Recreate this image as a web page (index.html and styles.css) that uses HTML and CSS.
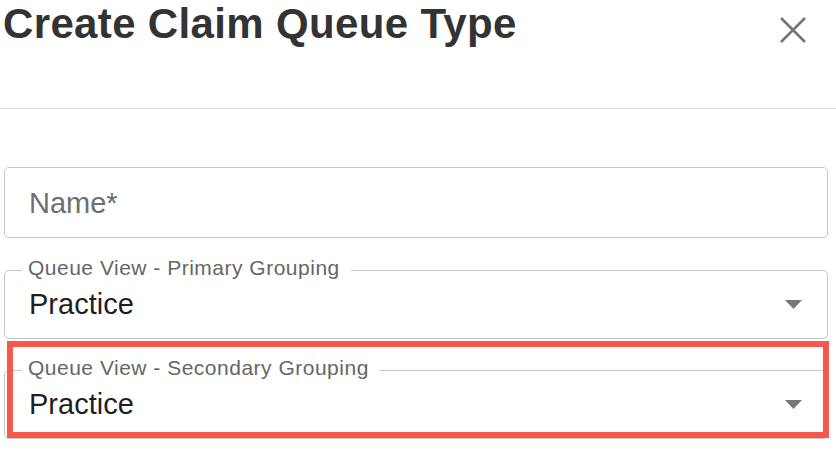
FILE: index.html
```html
<!DOCTYPE html>
<html lang="en">
<head>
<meta charset="utf-8">
<title>Create Claim Queue Type</title>
<link rel="stylesheet" href="styles.css">
</head>
<body>
<div class="dialog">
  <header class="dialog-header">
    <h1 class="dialog-title">Create Claim Queue Type</h1>
    <button class="close-btn" type="button" aria-label="Close">
      <svg class="close-icon" width="26" height="26" viewBox="0 0 26 26">
        <line x1="1" y1="1" x2="25" y2="25"/>
        <line x1="25" y1="1" x2="1" y2="25"/>
      </svg>
    </button>
  </header>
  <form class="dialog-body">
    <div class="field field-plain">
      <span class="placeholder">Name*</span>
    </div>
    <fieldset class="field field-select">
      <legend class="field-label">Queue View - Primary Grouping</legend>
      <div class="select-row">
        <span class="select-value">Practice</span>
        <svg class="arrow" width="17" height="9" viewBox="0 0 17 9"><path d="M0 0h17L8.5 9z"/></svg>
      </div>
    </fieldset>
    <div class="highlight-wrap">
      <fieldset class="field field-select">
        <legend class="field-label">Queue View - Secondary Grouping</legend>
        <div class="select-row">
          <span class="select-value">Practice</span>
          <svg class="arrow" width="17" height="9" viewBox="0 0 17 9"><path d="M0 0h17L8.5 9z"/></svg>
        </div>
      </fieldset>
      <div class="highlight"></div>
    </div>
  </form>
</div>
</body>
</html>
```

FILE: styles.css
```css
* { box-sizing: border-box; }

html, body {
  margin: 0;
  padding: 0;
  background: #ffffff;
}

body {
  font-family: "Liberation Sans", Arial, sans-serif;
  width: 836px;
  height: 452px;
  overflow: hidden;
}

.dialog-header {
  display: flex;
  justify-content: space-between;
  align-items: flex-start;
  height: 109px;
  border-bottom: 1px solid #e2e2e2;
  padding-left: 3px;
}

.dialog-title {
  margin: 0;
  font-size: 42px;
  line-height: 48px;
  font-weight: 700;
  color: #333333;
  letter-spacing: 0.35px;
}

.close-btn {
  border: 0;
  background: transparent;
  padding: 0;
  margin: 17px 30px 0 0;
  width: 26px;
  height: 26px;
  display: flex;
}

.close-icon line {
  stroke: #777777;
  stroke-width: 2.6;
}

.dialog-body {
  padding: 0 8px 0 4px;
  margin-top: 58px;
}

.field {
  border: 1px solid #c6c6c6;
  border-radius: 5px;
  margin: 0;
  min-width: 0;
}

.field-plain {
  height: 71px;
  display: flex;
  align-items: center;
  padding-left: 24px;
}

.placeholder {
  font-size: 29px;
  color: #6e6e6e;
  line-height: 34px;
}

.field-select {
  margin-top: 22px;
  padding: 7px 25px 17px 24px;
}

.field-label {
  margin-left: -7px;
  padding: 0 11px 4px 6px;
  font-size: 21px;
  line-height: 16px;
  color: #666666;
  letter-spacing: 0.5px;
}

.select-row {
  display: flex;
  justify-content: space-between;
  align-items: center;
  height: 34px;
}

.select-value {
  font-size: 29px;
  line-height: 34px;
  color: #1f1f1f;
}

.arrow path {
  fill: #777777;
}

.highlight-wrap {
  position: relative;
  margin-top: 21px;
}

.highlight-wrap .field-select {
  margin-top: 0;
}

.highlight {
  position: absolute;
  left: 3px;
  right: -1px;
  top: -19px;
  bottom: 1px;
  border: 6px solid #f5584c;
  pointer-events: none;
}
```
